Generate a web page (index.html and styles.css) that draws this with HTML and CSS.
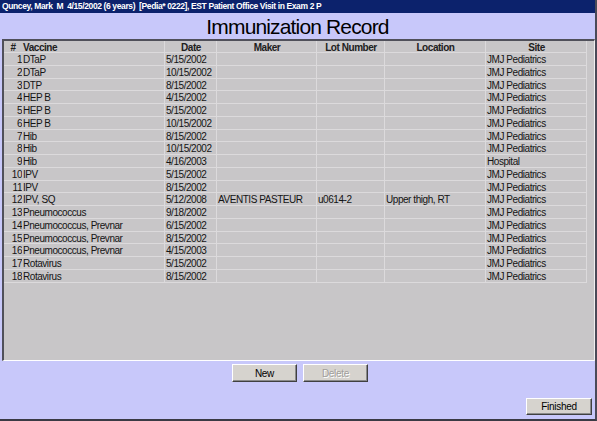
FILE: index.html
```html
<!DOCTYPE html>
<html>
<head>
<meta charset="utf-8">
<link rel="stylesheet" href="styles.css">
</head>
<body>
<div class="win">
  <div class="titlebar">Quncey, Mark  M  4/15/2002 (6 years)  [Pedia* 0222], EST Patient Office Visit in Exam 2 P</div>
  <div class="heading">Immunization Record</div>
  <div class="gridbox">
    <div class="grid">
      <div class="hd c-num">#</div><div class="hd c-vac">Vaccine</div><div class="hd">Date</div><div class="hd">Maker</div><div class="hd">Lot Number</div><div class="hd">Location</div><div class="hd">Site</div>

      <div class="c-num">1</div><div class="c-vac">DTaP</div><div>5/15/2002</div><div></div><div></div><div></div><div>JMJ Pediatrics</div>
      <div class="c-num">2</div><div class="c-vac">DTaP</div><div>10/15/2002</div><div></div><div></div><div></div><div>JMJ Pediatrics</div>
      <div class="c-num">3</div><div class="c-vac">DTP</div><div>8/15/2002</div><div></div><div></div><div></div><div>JMJ Pediatrics</div>
      <div class="c-num">4</div><div class="c-vac">HEP B</div><div>4/15/2002</div><div></div><div></div><div></div><div>JMJ Pediatrics</div>
      <div class="c-num">5</div><div class="c-vac">HEP B</div><div>5/15/2002</div><div></div><div></div><div></div><div>JMJ Pediatrics</div>
      <div class="c-num">6</div><div class="c-vac">HEP B</div><div>10/15/2002</div><div></div><div></div><div></div><div>JMJ Pediatrics</div>
      <div class="c-num">7</div><div class="c-vac">Hib</div><div>8/15/2002</div><div></div><div></div><div></div><div>JMJ Pediatrics</div>
      <div class="c-num">8</div><div class="c-vac">Hib</div><div>10/15/2002</div><div></div><div></div><div></div><div>JMJ Pediatrics</div>
      <div class="c-num">9</div><div class="c-vac">Hib</div><div>4/16/2003</div><div></div><div></div><div></div><div>Hospital</div>
      <div class="c-num">10</div><div class="c-vac">IPV</div><div>5/15/2002</div><div></div><div></div><div></div><div>JMJ Pediatrics</div>
      <div class="c-num">11</div><div class="c-vac">IPV</div><div>8/15/2002</div><div></div><div></div><div></div><div>JMJ Pediatrics</div>
      <div class="c-num">12</div><div class="c-vac">IPV, SQ</div><div>5/12/2008</div><div>AVENTIS PASTEUR</div><div>u0614-2</div><div>Upper thigh, RT</div><div>JMJ Pediatrics</div>
      <div class="c-num">13</div><div class="c-vac">Pneumococcus</div><div>9/18/2002</div><div></div><div></div><div></div><div>JMJ Pediatrics</div>
      <div class="c-num">14</div><div class="c-vac">Pneumococcus, Prevnar</div><div>6/15/2002</div><div></div><div></div><div></div><div>JMJ Pediatrics</div>
      <div class="c-num">15</div><div class="c-vac">Pneumococcus, Prevnar</div><div>8/15/2002</div><div></div><div></div><div></div><div>JMJ Pediatrics</div>
      <div class="c-num">16</div><div class="c-vac">Pneumococcus, Prevnar</div><div>4/15/2003</div><div></div><div></div><div></div><div>JMJ Pediatrics</div>
      <div class="c-num">17</div><div class="c-vac">Rotavirus</div><div>5/15/2002</div><div></div><div></div><div></div><div>JMJ Pediatrics</div>
      <div class="c-num">18</div><div class="c-vac">Rotavirus</div><div>8/15/2002</div><div></div><div></div><div></div><div>JMJ Pediatrics</div>
    </div>
  </div>
  <div class="footer">
    <div class="btnrow">
      <button class="btn">New</button>
      <button class="btn disabled">Delete</button>
    </div>
    <div class="finrow">
      <button class="btn fin">Finished</button>
    </div>
  </div>
</div>
</body>
</html>
```
FILE: styles.css
```css
* { box-sizing: border-box; }
html, body { margin: 0; padding: 0; }
body {
  width: 597px;
  height: 421px;
  overflow: hidden;
  background: #c8c8fa;
  font-family: "Liberation Sans", Arial, sans-serif;
}
.win {
  width: 597px;
  height: 421px;
  display: flex;
  flex-direction: column;
  border-right: 2px solid #4a4a58;
  border-bottom: 2px solid #3a3a44;
  background: #c8c8fa;
}
.titlebar {
  height: 13px;
  background: #0c226c;
  color: #ffffff;
  font-weight: bold;
  font-size: 8.5px;
  letter-spacing: -0.38px;
  line-height: 13px;
  padding-left: 2px;
  white-space: pre;
  overflow: hidden;
}
.heading {
  height: 26px;
  text-align: center;
  font-size: 21px;
  letter-spacing: -0.85px;
  line-height: 27px;
  color: #000;
}
.gridbox {
  margin-left: 2px;
  height: 322px;
  background: #c8c6c8;
  border-top: 2px solid #50505a;
  border-left: 2px solid #50505a;
  border-right: 1px solid #f0f0f0;
  border-bottom: 1px solid #ffffff;
}
.grid {
  display: grid;
  grid-template-columns: 18px 143px 52px 100px 68px 101px 101px;
  grid-template-rows: 12px;
  grid-auto-rows: 12.78px;
  width: 583px;
  font-size: 10px;
  letter-spacing: -0.45px;
  color: #141414;
}
.grid > div {
  border-bottom: 1px solid #dcdadc;
  border-right: 1px solid #dcdadc;
  padding-left: 1px;
  line-height: 13px;
  white-space: nowrap;
  overflow: hidden;
}
.grid > div.c-num {
  border-right: none;
  text-align: right;
  padding-left: 0;
  padding-right: 0;
}
.grid > div.hd {
  font-weight: bold;
  text-align: center;
  line-height: 13px;
  color: #202020;
}
.grid > div.hd.c-vac { text-align: left; }
.grid > div.hd.c-num { text-align: center; }
.footer {
  flex: 1;
  display: flex;
  flex-direction: column;
  background: #c8c8fa;
}
.btnrow {
  display: flex;
  justify-content: center;
  gap: 6px;
  margin-top: 3px;
  padding-left: 5px;
}
.finrow {
  margin-top: auto;
  margin-bottom: 4px;
  display: flex;
  justify-content: flex-end;
  padding-right: 3px;
}
.btn {
  width: 65px;
  height: 18px;
  padding: 0;
  background: #d6d3ce;
  border-top: 1px solid #ffffff;
  border-left: 1px solid #ffffff;
  border-right: 1px solid #404040;
  border-bottom: 1px solid #404040;
  box-shadow: inset -1px -1px 0 #8a8a8a;
  font-family: "Liberation Sans", Arial, sans-serif;
  font-size: 10px;
  letter-spacing: -0.3px;
  color: #000;
}
.btn.disabled {
  color: #a09e9a;
  text-shadow: 1px 1px 0 #ffffff;
}
.btn.fin {
  width: 66px;
  height: 17px;
}
```
